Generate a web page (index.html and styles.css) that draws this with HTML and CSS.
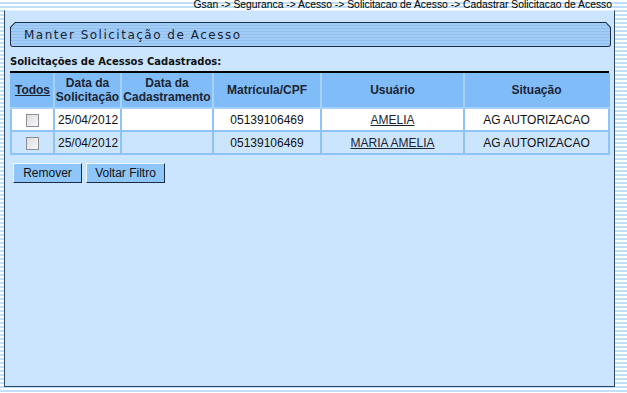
FILE: index.html
```html
<!DOCTYPE html>
<html>
<head>
    <title>Manter Solicitação de Acesso</title>
    <meta charset="utf-8">
    <link rel="stylesheet" href="styles.css">
</head>
<body>
    <div class="breadcrumb">Gsan -&gt; Seguranca -&gt; Acesso -&gt; Solicitacao de Acesso -&gt; Cadastrar Solicitacao de Acesso</div>

    <div class="panel">
        <div class="title-bar">
            <div class="title-inner">Manter Solicitação de Acesso</div>
        </div>

        <div class="section-title">Solicitações de Acessos Cadastrados:</div>

        <table class="grid">
            <thead>
                <tr>
                    <th class="col-todos"><a href="#">Todos</a></th>
                    <th class="col-data">Data da Solicitação</th>
                    <th class="col-cad">Data da Cadastramento</th>
                    <th class="col-mat">Matrícula/CPF</th>
                    <th class="col-user">Usuário</th>
                    <th class="col-sit">Situação</th>
                </tr>
            </thead>
            <tbody>
                <tr class="row-odd">
                    <td class="center"><span class="check"></span></td>
                    <td>25/04/2012</td>
                    <td></td>
                    <td class="center">05139106469</td>
                    <td class="center"><a href="#">AMELIA</a></td>
                    <td class="center">AG AUTORIZACAO</td>
                </tr>
                <tr class="row-even">
                    <td class="center"><span class="check"></span></td>
                    <td>25/04/2012</td>
                    <td></td>
                    <td class="center">05139106469</td>
                    <td class="center"><a href="#">MARIA AMELIA</a></td>
                    <td class="center">AG AUTORIZACAO</td>
                </tr>
            </tbody>
        </table>

        <div class="actions">
            <button class="btn btn-remover">Remover</button>
            <button class="btn btn-voltar">Voltar Filtro</button>
        </div>
    </div>
</body>
</html>
```

FILE: styles.css
```css
body {
    margin: 0;
    padding: 0;
    font-family: "Liberation Sans", Arial, sans-serif;
    color: #111;
    background: repeating-linear-gradient(to bottom, #ffffff 0, #ffffff 2px, #bfe0f6 2px, #bfe0f6 4px);
    height: 393px;
    overflow: hidden;
}

.breadcrumb {
    height: 10px;
    line-height: 10px;
    font-size: 10.35px;
    text-align: right;
    padding-right: 15px;
    color: #000;
    white-space: nowrap;
}

.panel {
    margin-left: 4px;
    width: 599px;
    height: 364px;
    padding: 11px 5px 0 5px;
    background: #cce5fe;
    border: 1px solid #2c4766;
    border-top-color: #e4f0fb;
}

.title-bar {
    width: 601px;
    height: 25px;
    padding: 1px;
    box-sizing: border-box;
    background: #1c2c44;
    border-radius: 0 0 3px 3px;
    clip-path: polygon(5px 0, calc(100% - 5px) 0, 100% 5px, 100% 100%, 0 100%, 0 5px);
}

.title-inner {
    height: 23px;
    line-height: 25px;
    padding-left: 13px;
    border-radius: 0 0 2px 2px;
    clip-path: polygon(4.4px 0, calc(100% - 4.4px) 0, 100% 4.4px, 100% 100%, 0 100%, 0 4.4px);
    background: repeating-linear-gradient(to bottom, #a3cdf6 0, #a3cdf6 2px, #8ebfef 2px, #8ebfef 3px);
    font-family: "DejaVu Sans", Verdana, sans-serif;
    font-size: 12px;
    letter-spacing: 1.5px;
    color: #1a2438;
}

.section-title {
    margin-top: 8px;
    padding-bottom: 2px;
    font-family: "DejaVu Sans", Verdana, sans-serif;
    font-size: 10px;
    font-weight: bold;
    line-height: 14px;
    border-bottom: 2px solid #000;
}

.grid {
    width: 600px;
    table-layout: fixed;
    border-collapse: collapse;
    font-size: 12px;
}

.grid th {
    background: #80bcf8;
    color: #1c2433;
    font-weight: bold;
    line-height: 14px;
    height: 34px;
    padding: 0;
    border: 2px solid #a6d1fb;
    border-top: none;
}

.grid th:first-child {
    border-left-color: #80bcf8;
}

.grid th:last-child {
    border-right-color: #80bcf8;
}

.grid th a,
.grid td a {
    color: #1c2433;
    text-decoration: underline;
}

.col-todos { width: 41px; }
.col-data { width: 65px; }
.col-cad { width: 90px; }
.col-mat { width: 106px; }
.col-user { width: 141px; }

.grid td {
    height: 21px;
    padding: 0 0 0 3px;
    border: 2px solid #8dc3f6;
    color: #111;
    white-space: nowrap;
}

.grid td.center {
    text-align: center;
    padding: 0;
}

.row-odd td {
    background: #ffffff;
}

.row-even td {
    background: #cce5fe;
}

.check {
    display: inline-block;
    width: 11px;
    height: 11px;
    vertical-align: middle;
    border: 1px solid #8a8f96;
    background: linear-gradient(135deg, #dcdcdc, #f8f8f8);
}

.actions {
    margin-top: 8px;
    padding-left: 3px;
    display: flex;
    gap: 4px;
}

.btn {
    height: 20px;
    padding: 0;
    white-space: nowrap;
    font-family: "Liberation Sans", Arial, sans-serif;
    font-size: 12px;
    color: #111;
    background: #8ec6fa;
    border: 1px solid #1c2c44;
    border-top-color: #f2f8ff;
    border-left-color: #f2f8ff;
    cursor: pointer;
}

.btn-remover { width: 69px; }
.btn-voltar { width: 79px; }
```
